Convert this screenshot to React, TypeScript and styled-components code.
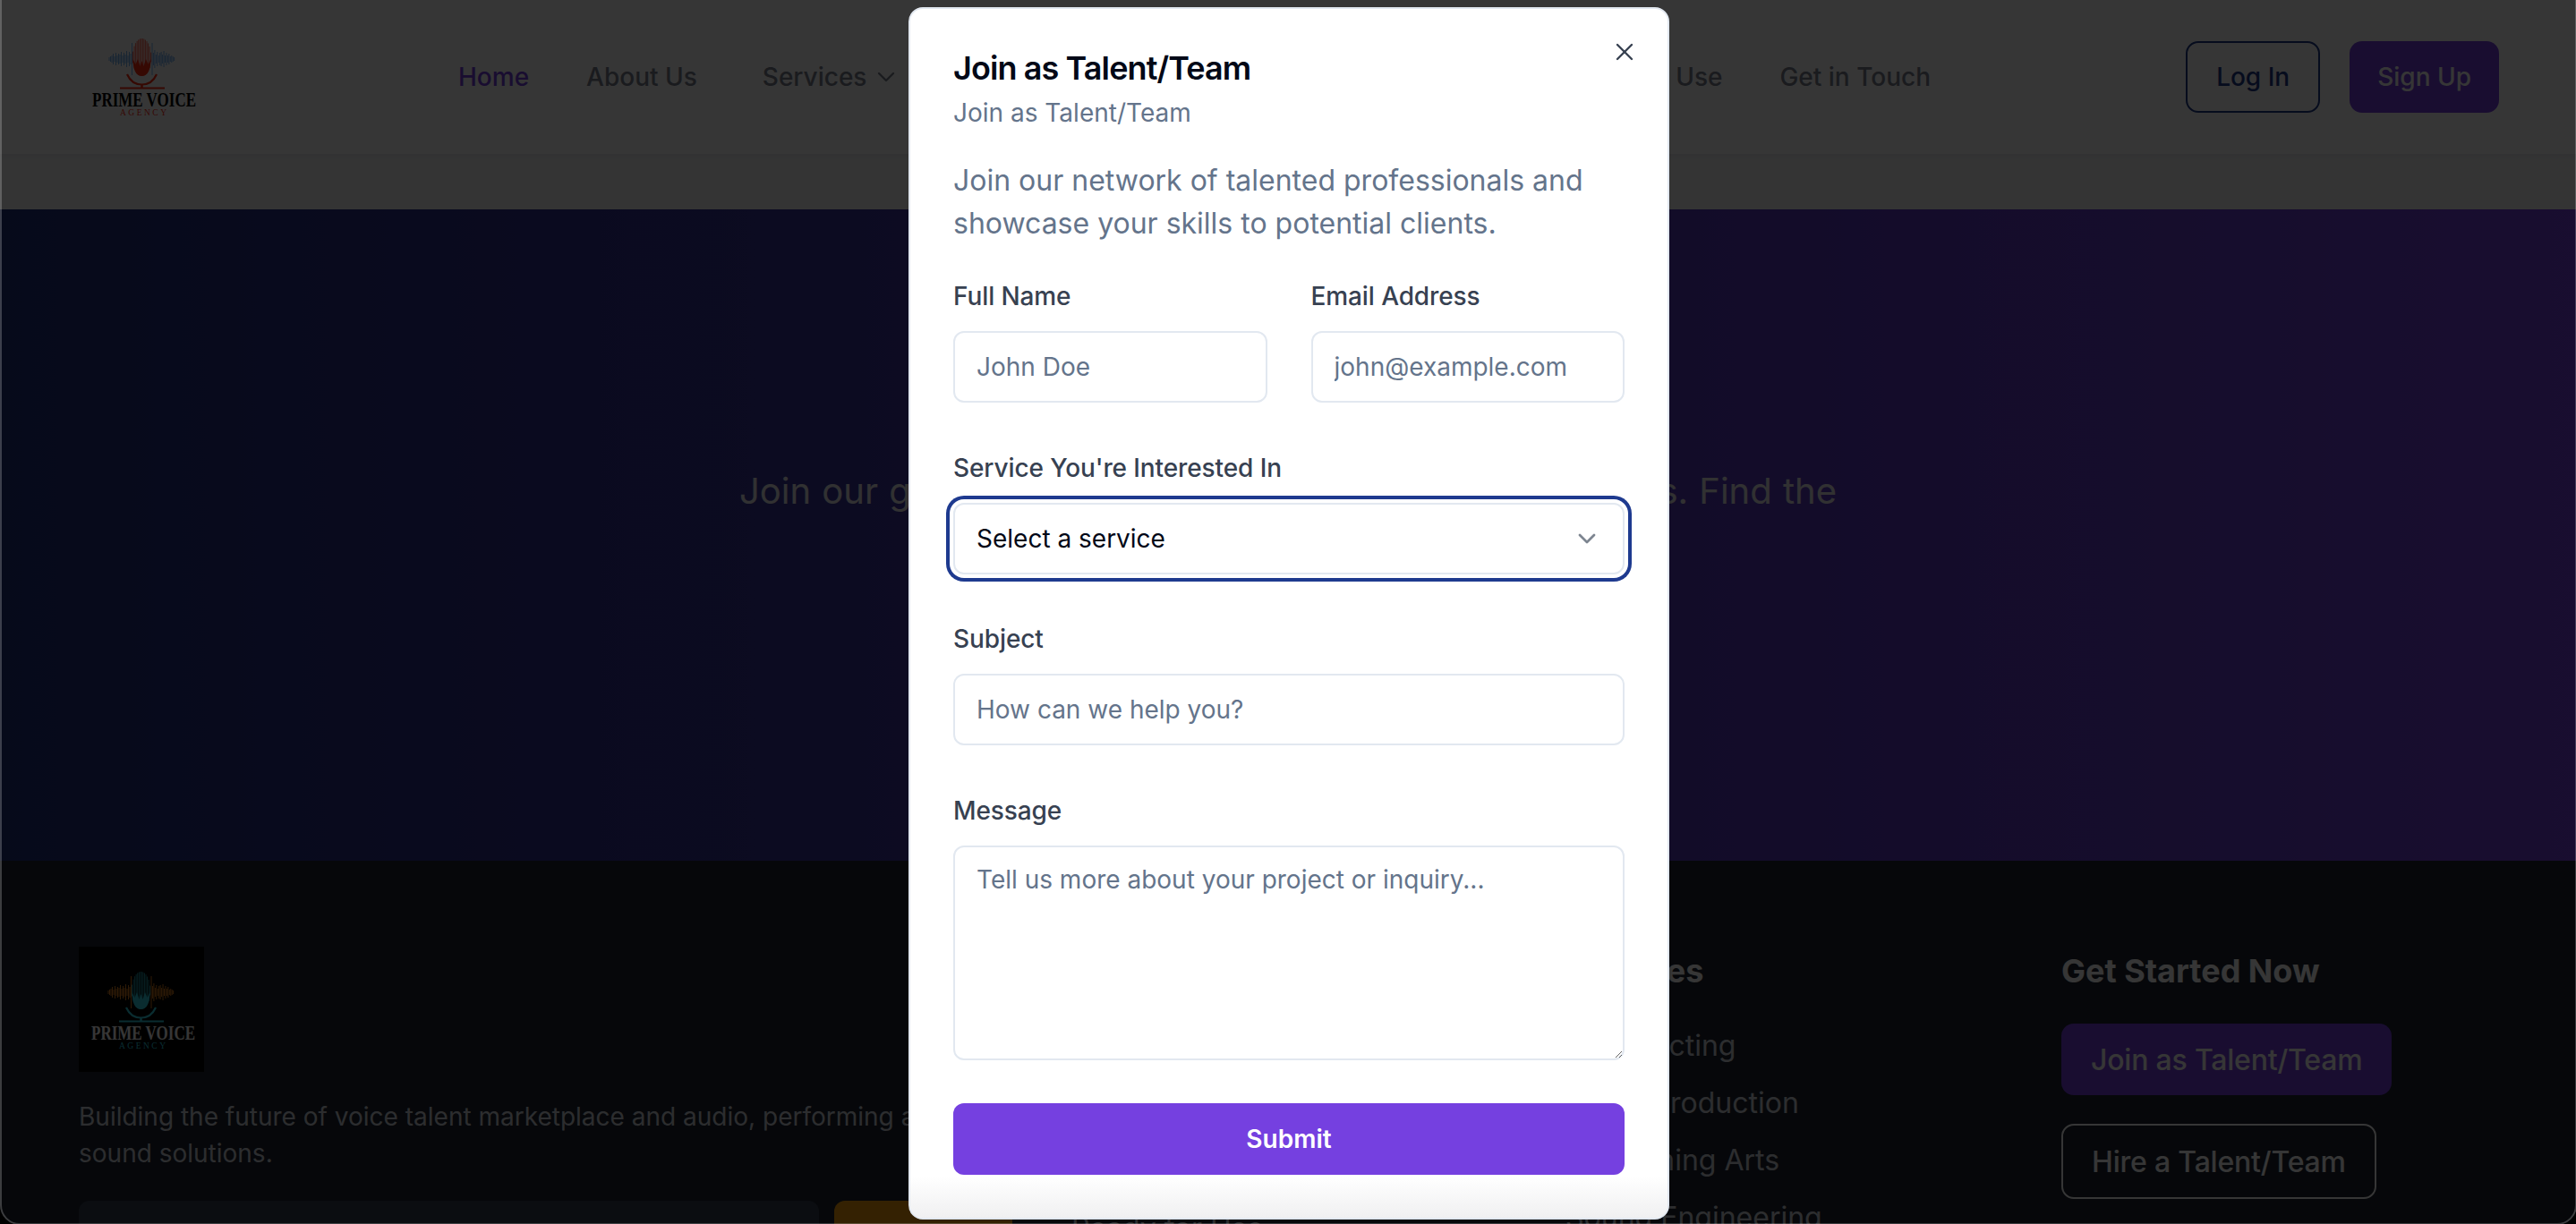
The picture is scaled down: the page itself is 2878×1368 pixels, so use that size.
import React from "react";
import styled, { createGlobalStyle } from "styled-components";
import { ChevronDown, X } from "lucide-react";

const Global = createGlobalStyle`
  html, body { margin: 0; padding: 0; background: #fff; }
  * { box-sizing: border-box; }
  body { font-family: Inter, "Noto Sans", sans-serif; }
`;

const Viewport = styled.div`
  position: relative;
  width: 2878px;
  height: 1368px;
  overflow: hidden;
  background: #f3f4f6;
`;

const Header = styled.header`
  height: 172px;
  background: #fff;
  display: flex;
  align-items: center;
  padding: 0 86px 0 96px;
  box-shadow: 0 2px 6px rgba(0,0,0,.05);
`;

const LogoWrap = styled.div`
  width: 140px;
  flex: none;
  svg { display: block; }
`;

const Nav = styled.nav`
  display: flex;
  align-items: center;
  justify-content: space-between;
  width: 1645px;
  flex: none;
  margin-left: 276px;
`;

const NavGroup = styled.div`
  display: flex;
  align-items: center;
  gap: 64px;
`;

const NavLink = styled.span<{ $active?: boolean; $shift?: boolean }>`
  display: inline-flex;
  align-items: center;
  gap: 6px;
  font-size: 28px;
  font-weight: 500;
  margin-left: ${(p) => (p.$shift ? 9 : 0)}px;
  color: ${(p) => (p.$active ? "#7540e0" : "#7a8090")};
`;

const HeaderButtons = styled.div`
  display: flex;
  gap: 33px;
  margin-left: auto;
`;

const Btn = styled.span<{ $variant: "outline" | "solid" | "ghost"; $big?: boolean; $pad: number }>`
  display: inline-flex;
  align-items: center;
  justify-content: center;
  height: ${(p) => (p.$variant === "ghost" ? 84 : 80)}px;
  padding: 0 ${(p) => p.$pad}px;
  border-radius: 14px;
  font-size: ${(p) => (p.$big ? 32 : 28)}px;
  letter-spacing: ${(p) => (p.$big ? "-0.2px" : "0")};
  font-weight: 500;
  white-space: nowrap;
  color: ${(p) => (p.$variant === "outline" ? "#1e3a8a" : "#fff")};
  background: ${(p) => (p.$variant === "solid" ? "#7540e0" : "transparent")};
  border: ${(p) =>
    p.$variant === "outline" ? "2px solid #1e3a8a" : p.$variant === "ghost" ? "2px solid #fff" : "0"};
`;

const Strip = styled.div`
  height: 62px;
`;

const Hero = styled.section`
  height: 728px;
  background: linear-gradient(90deg, #1f2f7d 0%, #7540e0 100%);
  display: flex;
  justify-content: center;
  padding-top: 285px;
`;

const HeroText = styled.p`
  margin: 0;
  font-size: 40px;
  line-height: 60px;
  word-spacing: 1px;
  color: #e5e7eb;
  white-space: nowrap;
`;

const Footer = styled.footer`
  height: 406px;
  background: #1c2432;
  display: grid;
  grid-template-columns: 1109px 552px 554px 1fr;
  padding: 96px 0 0 88px;
`;

const Brand = styled.div`
  min-width: 0;
`;

const FooterLogo = styled.div`
  width: 140px;
  height: 140px;
  background: #000;
  display: flex;
  align-items: center;
  padding: 2px 0 0 7px;
  svg { display: block; flex: none; }
`;

const BrandText = styled.p`
  margin: 30px 0 0;
  font-size: 28px;
  line-height: 41px;
  color: #d1d5db;
  width: 1040px;
`;

const Subscribe = styled.div`
  display: flex;
  gap: 17px;
  margin-top: 32px;
`;

const SubscribeInput = styled.div`
  width: 827px;
  height: 80px;
  flex: none;
  border-radius: 12px;
  background: #374151;
`;

const SubscribeBtn = styled.div`
  width: 199px;
  height: 80px;
  flex: none;
  border-radius: 12px;
  background: #f59e0b;
`;

const FooterCol = styled.div`
  display: flex;
  flex-direction: column;
`;

const FooterHead = styled.h4`
  margin: -2px 0 0;
  height: 58px;
  line-height: 58px;
  font-size: 36px;
  font-weight: 700;
  color: #fff;
  white-space: nowrap;
`;

const FooterLinks = styled.div<{ $drop?: number }>`
  display: flex;
  flex-direction: column;
  gap: 24px;
  margin-top: ${(p) => 35 + (p.$drop ?? 0)}px;
`;

const FooterLink = styled.span`
  font-size: 32px;
  line-height: 40px;
  color: #d1d5db;
  white-space: nowrap;
`;

const CtaStack = styled.div`
  display: flex;
  flex-direction: column;
  align-items: flex-start;
  gap: 32px;
  margin-top: 30px;
`;

const Overlay = styled.div`
  position: absolute;
  inset: 0;
  background: rgba(0, 0, 0, 0.79);
`;

const WindowFrame = styled.div`
  position: absolute;
  top: -3px;
  left: 0;
  right: -1px;
  bottom: -1px;
  border: 2px solid rgba(255, 255, 255, 0.22);
  border-radius: 0 0 22px 22px;
  box-shadow: 0 0 0 24px #000;
  pointer-events: none;
`;

const Modal = styled.div`
  position: absolute;
  left: 1015px;
  top: 8px;
  width: 850px;
  height: 1355px;
  background: #fff;
  border: 2px solid #e2e8f0;
  border-radius: 16px;
  padding: 48px;
  overflow: hidden;
  &::after {
    content: "";
    position: absolute;
    left: 0;
    right: 0;
    bottom: 0;
    height: 46px;
    background: linear-gradient(180deg, rgba(240,240,241,0), #f0f0f1);
    pointer-events: none;
  }
`;

const CloseBtn = styled.span`
  position: absolute;
  top: 32px;
  right: 32px;
  width: 32px;
  height: 32px;
  color: #374151;
  svg { display: block; }
`;

const Title = styled.h2`
  margin: 0;
  font-size: 36px;
  line-height: 36px;
  font-weight: 600;
  letter-spacing: -0.9px;
  color: #020817;
`;

const Subtitle = styled.p`
  margin: 12px 0 0;
  font-size: 28px;
  line-height: 40px;
  color: #64748b;
`;

const Lead = styled.p`
  margin: 32px 0 0;
  font-size: 32px;
  line-height: 48px;
  color: #64748b;
  width: 749px;
`;

const Form = styled.div`
  display: flex;
  flex-direction: column;
  margin-top: 37px;
  gap: 52.5px;
`;

const Row = styled.div`
  display: grid;
  grid-template-columns: 1fr 1fr;
  gap: 49px;
`;

const Field = styled.div`
  display: flex;
  flex-direction: column;
  gap: 19px;
  min-width: 0;
`;

const Label = styled.label`
  font-size: 28px;
  line-height: 40px;
  font-weight: 500;
  letter-spacing: -0.1px;
  color: #374151;
`;

const inputBase = `
  width: 100%;
  border: 2px solid #e2e8f0;
  border-radius: 12px;
  background: #fff;
  font-family: Inter, "Noto Sans", sans-serif;
  font-size: 28px;
  outline: none;
  display: block;
`;

const Input = styled.input`
  ${inputBase}
  height: 80px;
  padding: 0 24px;
  &::placeholder { color: #64748b; opacity: 1; }
`;

const SelectBox = styled.div`
  ${inputBase}
  height: 80px;
  padding: 0 24px;
  display: flex;
  align-items: center;
  justify-content: space-between;
  color: #020817;
  box-shadow: 0 0 0 4px #fff, 0 0 0 8px #1e3a8f;
  svg { color: #7d8590; display: block; }
`;

const TextArea = styled.textarea`
  ${inputBase}
  height: 240px;
  padding: 16px 24px;
  line-height: 40px;
  resize: vertical;
  &::placeholder { color: #64748b; opacity: 1; }
`;

const Submit = styled.button`
  width: 100%;
  margin: 48px 0 0;
  display: block;
  height: 80px;
  border: 0;
  border-radius: 12px;
  background: #7540e0;
  color: #fff;
  font-family: Inter, "Noto Sans", sans-serif;
  font-size: 28px;
  font-weight: 600;
`;

const waveL = [2, 3, 4, 6, 3, 7, 4, 6, 5, 8, 4, 7, 5, 9, 4, 8, 6, 18];
const waveR = [18, 7, 10, 5, 8, 4, 7, 8, 5, 9, 4, 7, 4, 6, 3, 4, 3, 2];

const Logo: React.FC<{ mic: string; wv: string; name: string }> = ({ mic, wv, name }) => (
  <svg width="130" height="100" viewBox="0 0 130 100">
    <g stroke={wv} strokeWidth="0.9">
      {waveL.map((h, i) => (
        <line key={i} x1={26 + i * 1.5} x2={26 + i * 1.5} y1={30 - h} y2={30 + h} />
      ))}
      {waveR.map((h, i) => (
        <line key={i} x1={74 + i * 1.45} x2={74 + i * 1.45} y1={30 - h} y2={30 + h} />
      ))}
    </g>
    <g stroke={mic} strokeWidth="0.7">
      {Array.from({ length: 14 }).map((_, i) => {
        const x = 52.5 + i * 1.55;
        const d = 21 * Math.sqrt(Math.max(0, 1 - ((x - 62.5) / 10.5) ** 2));
        return <line key={i} x1={x} x2={x} y1={28 - d} y2={28 + d} />;
      })}
    </g>
    <path d="M52.500 30 C52.500 42 56 49 62.500 49 C69 49 72.500 42 72.500 30 L69.500 36 L67 30 L64.500 38 L62.500 32 L60.500 38 L58 30 L55.500 36 Z" fill={mic} />
    <path d="M46 47 C50 56 56 58.500 62.500 58.500 C69 58.500 75 56 79 47" fill="none" stroke={mic} strokeWidth="2.200" />
    <path d="M62.500 58 V62" stroke={mic} strokeWidth="2.500" />
    <path d="M38 62.500 H88" stroke={mic} strokeWidth="2" />
    <text x="65" y="83" textAnchor="middle" fontFamily="Liberation Serif, serif" fontWeight="700" fontSize="23" textLength="116" lengthAdjust="spacingAndGlyphs" fill={name}>PRIME VOICE</text>
    <text x="64" y="93" textAnchor="middle" fontFamily="Liberation Serif, serif" fontSize="9.500" textLength="52" fill={mic}>AGENCY</text>
  </svg>
);

export default function App() {
  return (
    <Viewport>
      <Global />
      <Header>
        <LogoWrap>
          <Logo mic="#ff2a10" wv="#6aa8f0" name="#000" />
        </LogoWrap>
        <Nav>
          <NavGroup>
            <NavLink $active>Home</NavLink>
            <NavLink>About Us</NavLink>
            <NavLink $shift>Services <ChevronDown size={32} strokeWidth={1.8} /></NavLink>
          </NavGroup>
          <NavGroup>
            <NavLink>Terms of Use</NavLink>
            <NavLink>Get in Touch</NavLink>
          </NavGroup>
        </Nav>
        <HeaderButtons>
          <Btn $variant="outline" $pad={32}>Log In</Btn>
          <Btn $variant="solid" $pad={31}>Sign Up</Btn>
        </HeaderButtons>
      </Header>
      <Strip />
      <Hero>
        <HeroText>Join our growing network of skilled voice professionals. Find the</HeroText>
      </Hero>
      <Footer>
        <Brand>
          <FooterLogo>
            <Logo mic="#2fd0e0" wv="#f08a20" name="#fff" />
          </FooterLogo>
          <BrandText>Building the future of voice talent marketplace and audio, performing arts and sound solutions.</BrandText>
          <Subscribe>
            <SubscribeInput />
            <SubscribeBtn />
          </Subscribe>
        </Brand>
        <FooterCol>
          <FooterHead>Quick Links</FooterHead>
          <FooterLinks $drop={12}>
            <FooterLink>Home</FooterLink>
            <FooterLink>About Us</FooterLink>
            <FooterLink>Voice Talents</FooterLink>
            <FooterLink>Ready for Use</FooterLink>
          </FooterLinks>
        </FooterCol>
        <FooterCol>
          <FooterHead>Services</FooterHead>
          <FooterLinks>
            <FooterLink>Voice Acting</FooterLink>
            <FooterLink>Audio Production</FooterLink>
            <FooterLink>Performing Arts</FooterLink>
            <FooterLink>Sound Engineering</FooterLink>
          </FooterLinks>
        </FooterCol>
        <FooterCol>
          <FooterHead>Get Started Now</FooterHead>
          <CtaStack>
            <Btn $variant="solid" $big $pad={33}>Join as Talent/Team</Btn>
            <Btn $variant="ghost" $big $pad={32}>Hire a Talent/Team</Btn>
          </CtaStack>
        </FooterCol>
      </Footer>
      <Overlay />
      <WindowFrame />
      <Modal>
        <CloseBtn><X size={32} strokeWidth={1.8} /></CloseBtn>
        <Title>Join as Talent/Team</Title>
        <Subtitle>Join as Talent/Team</Subtitle>
        <Lead>Join our network of talented professionals and showcase your skills to potential clients.</Lead>
        <Form>
          <Row>
            <Field>
              <Label>Full Name</Label>
              <Input placeholder="John Doe" />
            </Field>
            <Field>
              <Label>Email Address</Label>
              <Input placeholder="john@example.com" />
            </Field>
          </Row>
          <Field>
            <Label>Service You're Interested In</Label>
            <SelectBox>
              <span>Select a service</span>
              <ChevronDown size={32} strokeWidth={2} />
            </SelectBox>
          </Field>
          <Field>
            <Label>Subject</Label>
            <Input placeholder="How can we help you?" />
          </Field>
          <Field>
            <Label>Message</Label>
            <TextArea placeholder="Tell us more about your project or inquiry..." />
          </Field>
        </Form>
        <Submit>Submit</Submit>
      </Modal>
    </Viewport>
  );
}
